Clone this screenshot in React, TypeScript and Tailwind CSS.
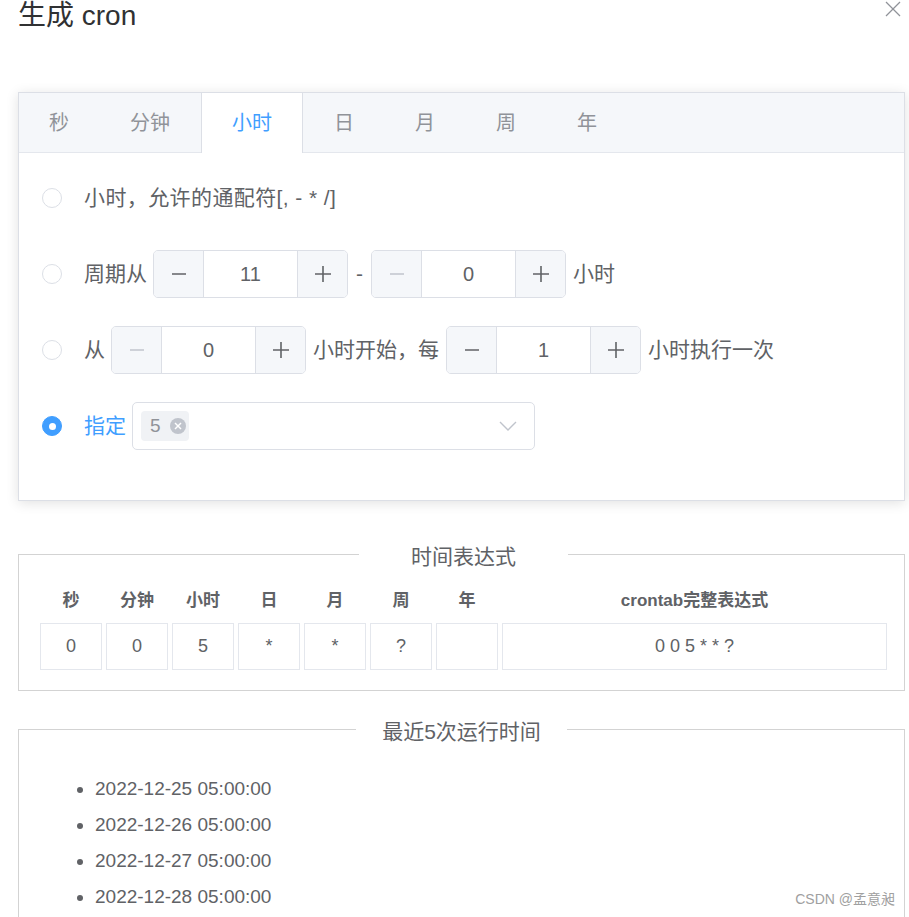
import React from 'react';

const FONT = '"Liberation Sans", "Noto Sans CJK SC", sans-serif';

const MinusIcon = ({ disabled }: { disabled?: boolean }) => (
  <svg width="16" height="16" viewBox="0 0 16 16">
    <line x1="1" y1="8" x2="15" y2="8" stroke={disabled ? '#c0c4cc' : '#606266'} strokeWidth="1.6" />
  </svg>
);

const PlusIcon = ({ disabled }: { disabled?: boolean }) => (
  <svg width="18" height="18" viewBox="0 0 18 18">
    <line x1="1" y1="9" x2="17" y2="9" stroke={disabled ? '#c0c4cc' : '#606266'} strokeWidth="1.6" />
    <line x1="9" y1="1" x2="9" y2="17" stroke={disabled ? '#c0c4cc' : '#606266'} strokeWidth="1.6" />
  </svg>
);

const InputNumber = ({ value, minDisabled }: { value: string; minDisabled?: boolean }) => (
  <div className="flex h-[48px] w-[195px] rounded-[5px] border border-[#dcdfe6] overflow-hidden bg-white">
    <div className="w-[50px] flex items-center justify-center bg-[#f5f7fa] border-r border-[#dcdfe6]">
      <MinusIcon disabled={minDisabled} />
    </div>
    <div className="flex-1 flex items-center justify-center text-[20px] text-[#606266]">{value}</div>
    <div className="w-[50px] flex items-center justify-center bg-[#f5f7fa] border-l border-[#dcdfe6]">
      <PlusIcon />
    </div>
  </div>
);

const Radio = ({ checked }: { checked?: boolean }) =>
  checked ? (
    <span className="w-[20px] h-[20px] rounded-full bg-[#409eff] border border-[#409eff] flex items-center justify-center mr-[22px] shrink-0">
      <span className="w-[7px] h-[7px] rounded-full bg-white" />
    </span>
  ) : (
    <span className="w-[20px] h-[20px] rounded-full bg-white border border-[#dcdfe6] mr-[22px] shrink-0" />
  );

const tabs = ['秒', '分钟', '小时', '日', '月', '周', '年'];
const headers = ['秒', '分钟', '小时', '日', '月', '周', '年', 'crontab完整表达式'];
const values = ['0', '0', '5', '*', '*', '?', '', '0 0 5 * * ?'];
const runs = [
  '2022-12-25 05:00:00',
  '2022-12-26 05:00:00',
  '2022-12-27 05:00:00',
  '2022-12-28 05:00:00',
  '2022-12-29 05:00:00',
];

export default function App() {
  return (
    <div className="relative w-[909px] h-[917px] overflow-hidden bg-white" style={{ fontFamily: FONT }}>
      {/* title */}
      <div className="flex items-start justify-between pl-[18px] pr-[8px]">
        <h1 className="text-[28px] leading-[32px] text-[#303133]">生成 cron</h1>
        <svg width="16" height="16" viewBox="0 0 16 16" className="mt-[1px]">
          <line x1="1" y1="1" x2="15" y2="15" stroke="#909399" strokeWidth="1.3" />
          <line x1="15" y1="1" x2="1" y2="15" stroke="#909399" strokeWidth="1.3" />
        </svg>
      </div>

      {/* tabs card */}
      <div className="mx-[18px] mt-[60px] w-[887px] border border-[#dcdfe6] bg-white shadow-[0_2px_12px_rgba(0,0,0,0.12)]">
        <div className="flex h-[60px] bg-[#f5f7fa] border-b border-[#e4e7ed]">
          {tabs.map((t, i) => {
            const active = t === '小时';
            return (
              <div
                key={t}
                className={
                  (i > 0 ? 'ml-[1px] ' : '') +
                  (active
                    ? 'h-[60px] px-[30px] flex items-center text-[20px] text-[#409eff] bg-white border-x border-[#dcdfe6]'
                    : 'h-[59px] px-[30px] flex items-center text-[20px] text-[#909399]')
                }
              >
                {t}
              </div>
            );
          })}
        </div>
        <div className="flex flex-col gap-[28px] pl-[23px] pt-[21px] pb-[50px] text-[21px] text-[#606266]">
          <div className="flex items-center h-[48px]">
            <Radio />
            <span className="tracking-[0.4px]">小时，允许的通配符[, - * /]</span>
          </div>
          <div className="flex items-center h-[48px]">
            <Radio />
            <span className="mr-[6px]">周期从</span>
            <InputNumber value="11" />
            <span className="mx-[8px]">-</span>
            <InputNumber value="0" minDisabled />
            <span className="ml-[7px]">小时</span>
          </div>
          <div className="flex items-center h-[48px]">
            <Radio />
            <span className="mr-[6px]">从</span>
            <InputNumber value="0" minDisabled />
            <span className="mx-[7px]">小时开始，每</span>
            <InputNumber value="1" />
            <span className="ml-[7px]">小时执行一次</span>
          </div>
          <div className="flex items-center h-[48px]">
            <Radio checked />
            <span className="mr-[6px] text-[#409eff]">指定</span>
            <div className="w-[403px] h-[48px] rounded-[5px] border border-[#dcdfe6] flex items-center pl-[8px] pr-[17px]">
              <div className="h-[30px] w-[48px] rounded-[4px] bg-[#f0f2f5] flex items-center pl-[9px] gap-[9px]">
                <span className="text-[19px] text-[#909399]">5</span>
                <span className="w-[16px] h-[16px] rounded-full bg-[#c0c4cc] flex items-center justify-center">
                  <svg width="8" height="8" viewBox="0 0 8 8">
                    <line x1="1" y1="1" x2="7" y2="7" stroke="white" strokeWidth="1.4" />
                    <line x1="7" y1="1" x2="1" y2="7" stroke="white" strokeWidth="1.4" />
                  </svg>
                </span>
              </div>
              <div className="flex-1" />
              <svg width="18" height="10" viewBox="0 0 18 10">
                <polyline points="1,1 9,9 17,1" fill="none" stroke="#c0c4cc" strokeWidth="1.4" />
              </svg>
            </div>
          </div>
        </div>
      </div>

      {/* expression */}
      <fieldset className="mx-[18px] mt-[36px] w-[887px] border border-[#d3d3d3] pl-[21px] pr-[17px] pb-[20px]">
        <legend className="mx-auto px-[52px] pt-[6px] text-[21px] leading-[28px] text-[#606266]">时间表达式</legend>
        <div className="grid grid-cols-[62px_62px_62px_62px_62px_62px_62px_1fr] gap-x-[4px] pt-[12px]">
          {headers.map((h) => (
            <div key={h} className="h-[36px] flex items-center justify-center text-[17px] font-bold text-[#606266]">
              {h}
            </div>
          ))}
          {values.map((v, i) => (
            <div
              key={i}
              className="mt-[4px] h-[47px] flex items-center justify-center border border-[#e4e7ed] text-[18px] text-[#606266] whitespace-pre"
            >
              {v}
            </div>
          ))}
        </div>
      </fieldset>

      {/* recent runs */}
      <fieldset className="mx-[18px] mt-[21px] w-[887px] border border-[#d3d3d3] px-[19px] pb-[20px]">
        <legend className="mx-auto px-[26px] pt-[6px] text-[21px] leading-[28px] text-[#606266]">最近5次运行时间</legend>
        <ul className="list-disc pl-[57px] pt-[25px] text-[19px] leading-[36px] text-[#606266] marker:text-[#606266]">
          {runs.map((r) => (
            <li key={r}>{r}</li>
          ))}
        </ul>
      </fieldset>

      <div className="absolute right-[14px] bottom-[7px] text-[14px] text-[#a0a0a0]">CSDN @孟意昶</div>
    </div>
  );
}
